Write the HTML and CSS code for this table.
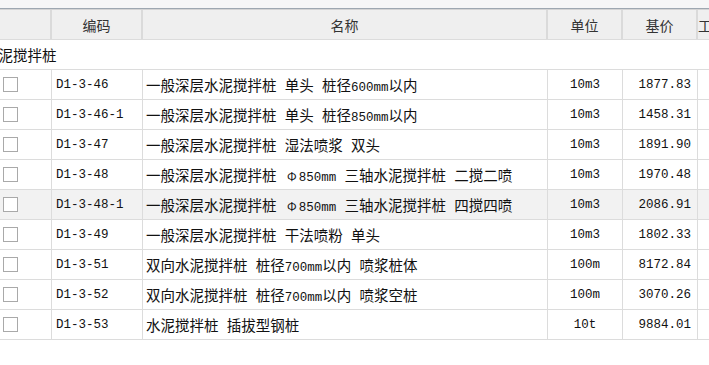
FILE: index.html
```html
<!DOCTYPE html>
<html lang="zh">
<head>
<meta charset="utf-8">
<link rel="stylesheet" href="styles.css">
</head>
<body>
<div class="topbar"></div>
<div class="grid">
  <div class="row head">
    <div class="c c0"></div>
    <div class="c c1 center">编码</div>
    <div class="c c2 center">名称</div>
    <div class="c c3 center">单位</div>
    <div class="c c4 center">基价</div>
    <div class="c c5">工</div>
  </div>
  <div class="row group"><span class="gtitle">水泥搅拌桩</span></div>

  <div class="row"><div class="c c0"><span class="cb"></span></div><div class="c c1 mono">D1-3-46</div><div class="c c2 name"><span>一般深层水泥搅拌桩 单头 桩径<span class="lat">600mm</span>以内</span></div><div class="c c3 mono center">10m3</div><div class="c c4 mono right">1877.83</div><div class="c c5"></div></div>
  <div class="row"><div class="c c0"><span class="cb"></span></div><div class="c c1 mono">D1-3-46-1</div><div class="c c2 name"><span>一般深层水泥搅拌桩 单头 桩径<span class="lat">850mm</span>以内</span></div><div class="c c3 mono center">10m3</div><div class="c c4 mono right">1458.31</div><div class="c c5"></div></div>
  <div class="row"><div class="c c0"><span class="cb"></span></div><div class="c c1 mono">D1-3-47</div><div class="c c2 name"><span>一般深层水泥搅拌桩 湿法喷浆 双头</span></div><div class="c c3 mono center">10m3</div><div class="c c4 mono right">1891.90</div><div class="c c5"></div></div>
  <div class="row"><div class="c c0"><span class="cb"></span></div><div class="c c1 mono">D1-3-48</div><div class="c c2 name"><span>一般深层水泥搅拌桩 <span class="phi">Φ</span><span class="lat">850mm</span> 三轴水泥搅拌桩 二搅二喷</span></div><div class="c c3 mono center">10m3</div><div class="c c4 mono right">1970.48</div><div class="c c5"></div></div>
  <div class="row hover"><div class="c c0"><span class="cb"></span></div><div class="c c1 mono">D1-3-48-1</div><div class="c c2 name"><span>一般深层水泥搅拌桩 <span class="phi">Φ</span><span class="lat">850mm</span> 三轴水泥搅拌桩 四搅四喷</span></div><div class="c c3 mono center">10m3</div><div class="c c4 mono right">2086.91</div><div class="c c5"></div></div>
  <div class="row"><div class="c c0"><span class="cb"></span></div><div class="c c1 mono">D1-3-49</div><div class="c c2 name"><span>一般深层水泥搅拌桩 干法喷粉 单头</span></div><div class="c c3 mono center">10m3</div><div class="c c4 mono right">1802.33</div><div class="c c5"></div></div>
  <div class="row"><div class="c c0"><span class="cb"></span></div><div class="c c1 mono">D1-3-51</div><div class="c c2 name"><span>双向水泥搅拌桩 桩径<span class="lat">700mm</span>以内 喷浆桩体</span></div><div class="c c3 mono center">100m</div><div class="c c4 mono right">8172.84</div><div class="c c5"></div></div>
  <div class="row"><div class="c c0"><span class="cb"></span></div><div class="c c1 mono">D1-3-52</div><div class="c c2 name"><span>双向水泥搅拌桩 桩径<span class="lat">700mm</span>以内 喷浆空桩</span></div><div class="c c3 mono center">100m</div><div class="c c4 mono right">3070.26</div><div class="c c5"></div></div>
  <div class="row"><div class="c c0"><span class="cb"></span></div><div class="c c1 mono">D1-3-53</div><div class="c c2 name"><span>水泥搅拌桩 插拔型钢桩</span></div><div class="c c3 mono center">10t</div><div class="c c4 mono right">9884.01</div><div class="c c5"></div></div>
</div>
</body>
</html>
```

FILE: styles.css
```css
html, body {
  margin: 0;
  padding: 0;
  background: #ffffff;
  overflow: hidden;
}
body {
  width: 709px;
  height: 365px;
  font-family: "Noto Sans CJK SC", sans-serif;
  color: #111;
}
.topbar {
  height: 8px;
  background: #f6f6f6;
  border-bottom: 1px solid #9ea7b0;
}
.grid {
  width: 780px;
  border-top: 1px solid #d4d4d4;
}
.row {
  display: grid;
  grid-template-columns: 52px 91px 405px 75px 75px 82px;
  height: 30px;
  box-sizing: border-box;
  border-bottom: 1px solid #dcdcdc;
}
.row.head {
  height: 30px;
  background: #efefef;
  color: #333;
  font-size: 14px;
}
.row.hover {
  background: #f2f2f2;
}
.row.group {
  display: flex;
  align-items: center;
  font-size: 14.5px;
  color: #111;
}
.gtitle {
  margin-left: -16px;
  white-space: nowrap;
}
.c {
  display: flex;
  align-items: center;
  border-right: 1px solid #dcdcdc;
  white-space: nowrap;
  overflow: hidden;
  box-sizing: border-box;
}
.head .c {
  border-right: 2px solid #dadada;
}
.c0 {
  padding-left: 3px;
}
.cb {
  width: 15px;
  height: 15px;
  box-sizing: border-box;
  border: 1px solid #a9a9a9;
  background: #fff;
  display: block;
}
.center { justify-content: center; }
.right { justify-content: flex-end; padding-right: 6px; }
.mono {
  font-family: "Liberation Mono", monospace;
  font-size: 12.5px;
  color: #111;
}
.c1.mono { padding-left: 4px; }
.name {
  padding-left: 3px;
  font-size: 14.5px;
  word-spacing: 5px;
  color: #111;
}
.phi {
  display: inline-block;
  width: 14px;
  text-align: center;
  font-size: 12px;
}
.lat {
  font-family: "Liberation Mono", monospace;
  font-size: 12.5px;
  word-spacing: 0;
}
.c5 { border-right: none; }
.head .c5 { border-right: none; }
```
